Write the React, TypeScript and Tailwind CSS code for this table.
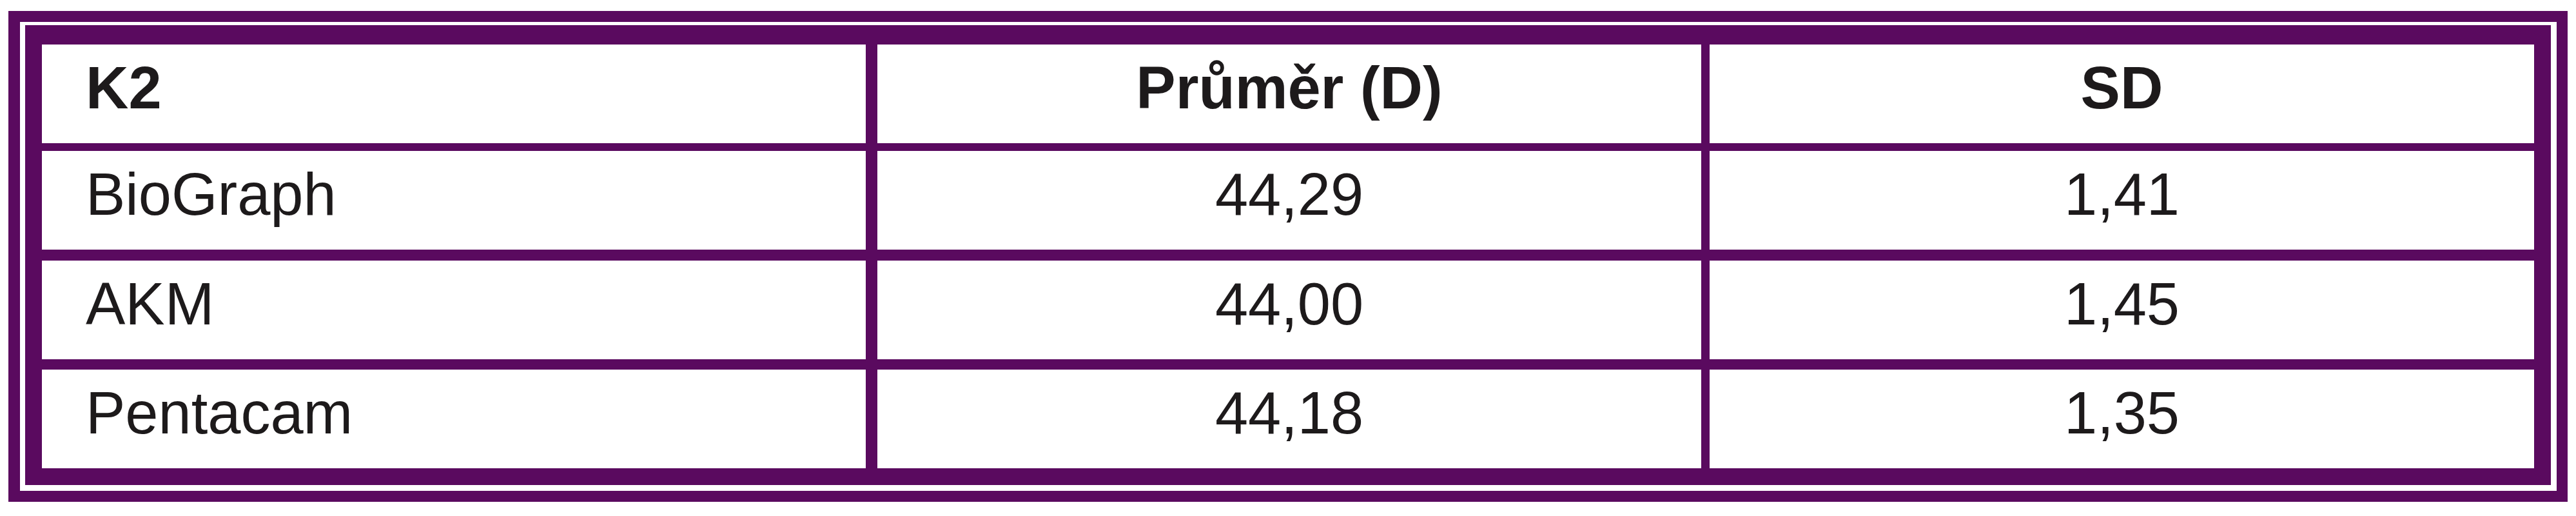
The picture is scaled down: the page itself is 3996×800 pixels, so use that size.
const rows = [
  { name: "BioGraph", mean: "44,29", sd: "1,41", gap: "mt-[12px]" },
  { name: "AKM", mean: "44,00", sd: "1,45", gap: "mt-[17px]" },
  { name: "Pentacam", mean: "44,18", sd: "1,35", gap: "mt-[16px]" },
];

function Row({
  first,
  second,
  third,
  head,
  className,
}: {
  first: string;
  second: string;
  third: string;
  head?: boolean;
  className?: string;
}) {
  const weight = head ? "font-bold" : "font-normal";
  return (
    <div className={`flex h-[153px] ${className ?? ""}`}>
      <div className={`w-[1278px] bg-white pl-[68px] pt-[14px] ${weight}`}>
        {first}
      </div>
      <div className={`ml-[18px] w-[1278px] bg-white pt-[14px] text-center ${weight}`}>
        {second}
      </div>
      <div className={`ml-[13px] w-[1279px] bg-white pt-[14px] text-center ${weight}`}>
        {third}
      </div>
    </div>
  );
}

export default function App() {
  return (
    <div className="w-[3996px] h-[800px] bg-white pl-[13px] pt-[17px]">
      <div className="w-[3970px] border-[17px] border-l-[18px] border-[#5a0a5f] pt-[5px] pl-[8px] pr-[9px] pb-[9px]">
        <div className="border-[26px] border-t-[30px] border-[#5a0a5f] bg-[#5a0a5f]">
          <div
            className="flex flex-col text-[92px] leading-[106px] text-[#1d1a1b]"
            style={{ fontFamily: '"Liberation Sans", Arial, sans-serif' }}
          >
            <Row first="K2" second="Průměr (D)" third="SD" head />
            {rows.map((r) => (
              <Row
                key={r.name}
                first={r.name}
                second={r.mean}
                third={r.sd}
                className={r.gap}
              />
            ))}
          </div>
        </div>
      </div>
    </div>
  );
}
